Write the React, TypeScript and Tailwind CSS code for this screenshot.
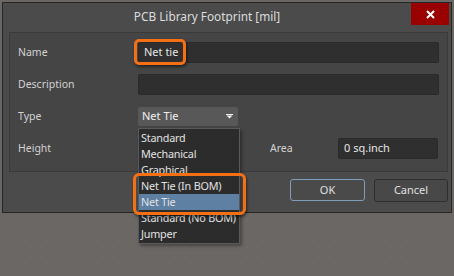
const font = { fontFamily: '"Noto Sans", "Open Sans", sans-serif' };

const Field = ({ value, className = '' }: { value?: string; className?: string }) => (
  <div
    className={`flex h-[21px] items-center rounded-[2px] border border-[#2a2a2a] bg-[#2f2f2f] px-[5px] text-[11px] text-[#e6e6e6] ${className}`}
  >
    {value}
  </div>
);

const options = [
  'Standard',
  'Mechanical',
  'Graphical',
  'Net Tie (In BOM)',
  'Net Tie',
  'Standard (No BOM)',
  'Jumper',
];

const App = () => (
  <div
    className="relative h-[276px] w-[454px] overflow-hidden bg-[#6b6765] bg-[radial-gradient(circle,#767270_0.6px,transparent_0.9px)] bg-[size:9px_9px] pl-[2px] pt-[2px]"
    style={font}
  >
    <div className="flex h-[211px] w-[450px] flex-col border border-[#262626] bg-[#4b4b4b]">
      {/* title bar */}
      <div className="flex h-[29px] items-start">
        <div className="flex h-[29px] flex-1 items-center justify-center pb-[1px] text-[11.8px] text-[#dcdcdc]">
          PCB Library Footprint [mil]
        </div>
        <button className="mr-[2px] flex h-[22px] w-[38px] items-center justify-center bg-[#9a0202]">
          <svg width="9" height="9" viewBox="0 0 9 9">
            <path d="M1 1L8 8M8 1L1 8" stroke="#fff" strokeWidth="2" />
          </svg>
        </button>
      </div>

      {/* form panel */}
      <div className="ml-[6px] h-[140px] w-[439px] border border-[#3a3a3a] bg-[#454545] px-[8px] pt-[9px] text-[10.5px] text-[#d2d2d2]">
        <div className="flex h-[21px] items-center">
          <span className="w-[120px]">Name</span>
          <Field value="Net tie" className="flex-1" />
        </div>
        <div className="mt-[11px] flex h-[21px] items-center">
          <span className="w-[120px]">Description</span>
          <Field className="flex-1" />
        </div>
        <div className="mt-[12px] flex h-[19px] items-center">
          <span className="w-[120px]">Type</span>
          <div className="flex h-[19px] w-[100px] items-center justify-between rounded-[2px] bg-[#585858] pl-[4px] pr-[5px] text-[11px] text-[#f0f0f0]">
            Net Tie
            <svg width="7" height="5" viewBox="0 0 7 5">
              <path d="M0 0.5H7" stroke="#f0f0f0" strokeWidth="1" />
              <path d="M0.5 1.5H6.5L3.5 4.5Z" fill="#f0f0f0" />
            </svg>
          </div>
        </div>
        <div className="mt-[12px] flex h-[21px] items-center">
          <span className="w-[252px]">Height</span>
          <span className="w-[68px]">Area</span>
          <Field value="0 sq.inch" className="w-[100px]" />
        </div>
      </div>

      {/* buttons */}
      <div className="mt-[7px] flex justify-end gap-[9px] pr-[3px] text-[11px] text-[#e0e0e0]">
        <button className="h-[22px] w-[75px] rounded-[3px] border border-[#7e9dbb] bg-[#4a4a4a]">
          OK
        </button>
        <button className="h-[23px] w-[74px] rounded-[3px] border border-[#2e2e2e] bg-[#484848]">
          Cancel
        </button>
      </div>
    </div>

    {/* dropdown list */}
    <div className="absolute left-[138px] top-[128px] w-[102px] border border-[#595959] bg-[#2c2c2c] py-[1px] text-[10.8px] text-[#e2e2e2] shadow-[2px_2px_3px_rgba(0,0,0,0.35)]">
      {options.map((o) => (
        <div
          key={o}
          className={`flex h-[16px] items-center whitespace-nowrap pl-[2px] tracking-[-0.2px] ${o === 'Net Tie' ? 'bg-[#5e80a2]' : ''}`}
        >
          {o}
        </div>
      ))}
    </div>

    {/* callouts */}
    <div className="absolute left-[134px] top-[39px] h-[26px] w-[52px] rounded-[5px] border-[3px] border-[#f47015] shadow-[1px_2px_3px_rgba(0,0,0,0.5)]" />
    <div className="absolute left-[133px] top-[173px] h-[42px] w-[113px] rounded-[6px] border-[3px] border-[#f47015] shadow-[1px_2px_3px_rgba(0,0,0,0.5)]" />
  </div>
);

export default App;
